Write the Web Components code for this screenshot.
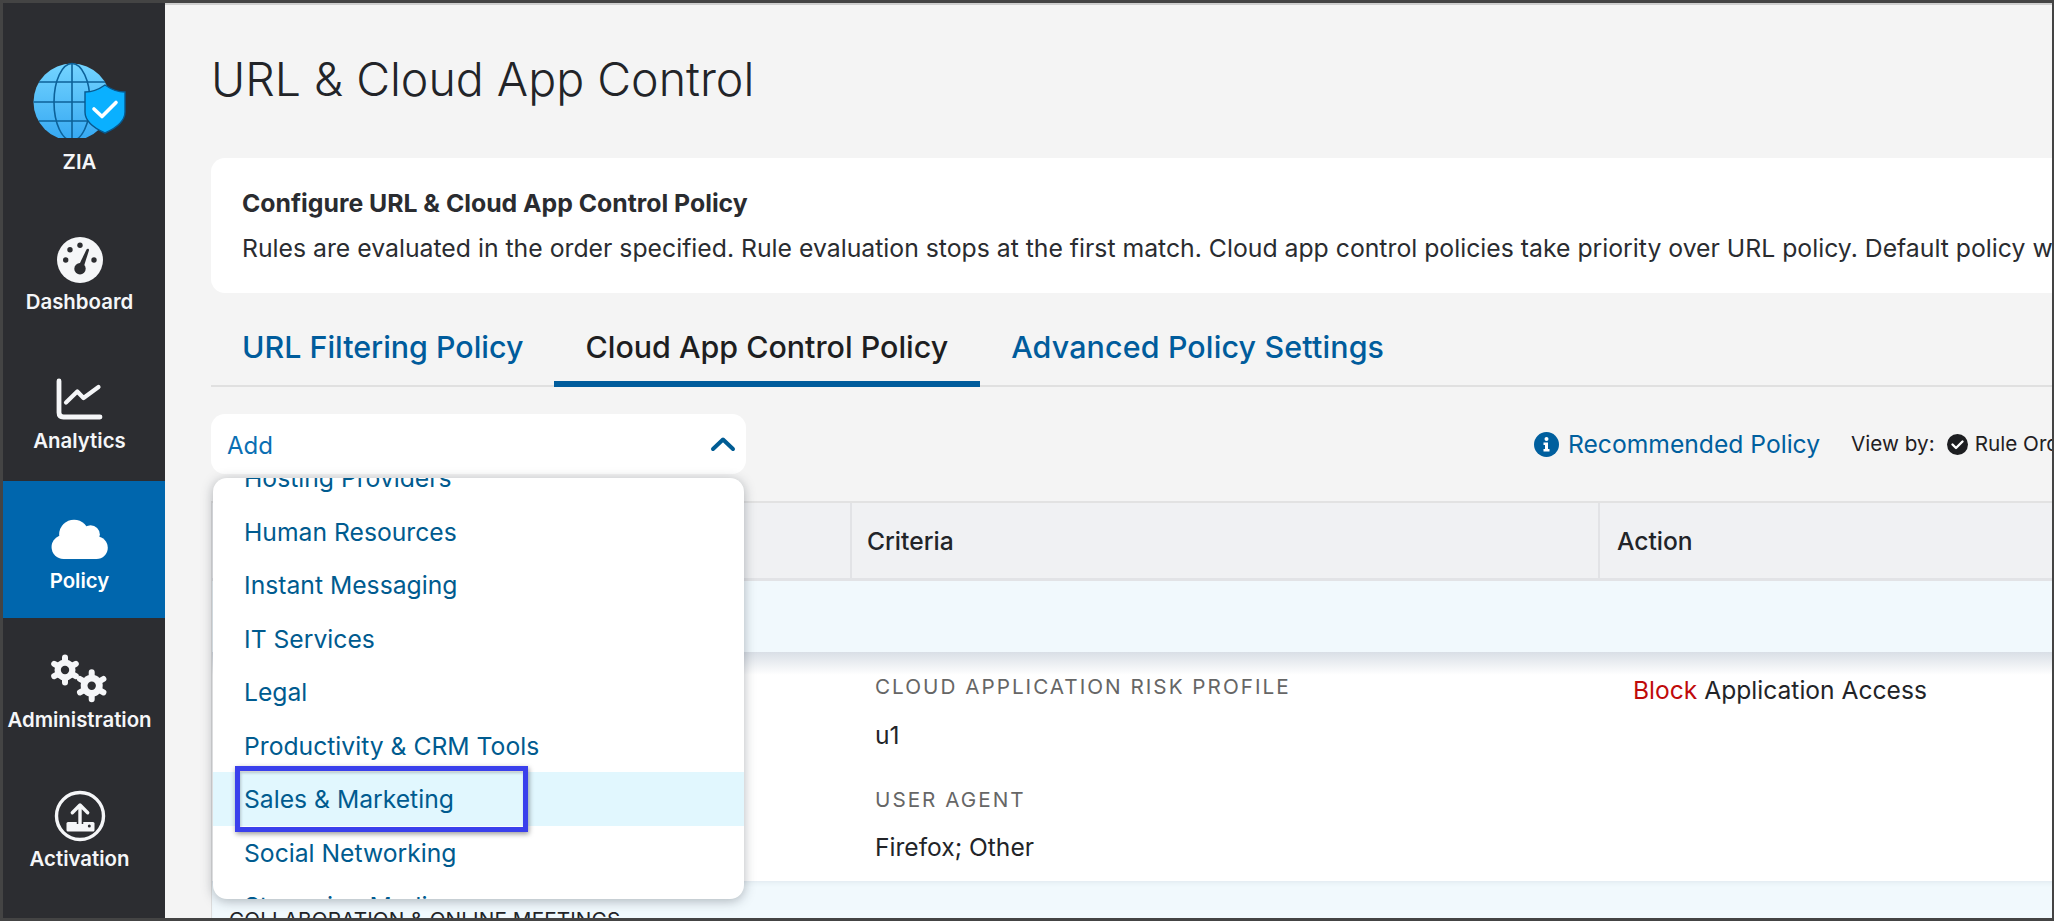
<!DOCTYPE html>
<html>
<head>
<meta charset="utf-8">
<title>URL &amp; Cloud App Control</title>
<style>
  html, body { margin: 0; background: #444; }
  body { font-family: Inter, "Noto Sans", sans-serif; }
</style>
</head>
<body>
<zs-app>
  <zs-sidebar slot="sidebar">
    <zs-nav-item label="ZIA" style="--height:199px;--top:41px;--icon-h:104px;">
      <svg width="100" height="80" viewBox="30 58 100 80">
        <defs><linearGradient id="g" x1="0" y1="0" x2="0" y2="1"><stop offset="0" stop-color="#74d4ff"/><stop offset="1" stop-color="#35a8f2"/></linearGradient></defs>
        <circle cx="72" cy="102" r="38.5" fill="url(#g)"/>
        <g fill="none" stroke="#0c6199" stroke-width="1.6">
          <ellipse cx="72" cy="102" rx="18" ry="38.5"/>
          <path d="M72 63.5V140.5M39 82H105M33.5 102H110M39 121H105"/>
        </g>
        <path d="M105 85C112 90 118 92 125 92L125 112C125 122 114 129 105 133C96 129 85 122 85 112L85 92C92 92 98 90 105 85Z" fill="#0ab0ff" stroke="#07598f" stroke-width="1.4"/>
        <path d="M94 109L102 116.500L116 102.500" fill="none" stroke="#fff" stroke-width="3.600" stroke-linecap="round" stroke-linejoin="round"/>
      </svg>
    </zs-nav-item>
    <zs-nav-item label="Dashboard">
      <svg width="48" height="48" viewBox="-24 -24 48 48">
        <circle r="23" fill="#f5f6f8"/>
        <g fill="#2c2d31"><circle cx="-14.300" r="2.700"/><circle cx="-10" cy="-10.300" r="2.700"/><circle cy="-14.700" r="2.700"/><circle cx="14" r="2.700"/><circle cy="8.700" r="5.700"/></g>
        <path d="M-2 7L6.500 -10.500C7.300 -12 9.300 -11.300 9 -9.700L3 9Z" fill="#2c2d31"/>
      </svg>
    </zs-nav-item>
    <zs-nav-item label="Analytics" style="--height:138px;">
      <svg width="50" height="44" viewBox="55 376 50 44">
        <path d="M59 380V411.500Q59 416 63.500 416H100" fill="none" stroke="#f5f6f8" stroke-width="4.800" stroke-linecap="round"/>
        <path d="M66 401.500L77.300 390.500L83.500 397L98.500 386" fill="none" stroke="#f5f6f8" stroke-width="4.200" stroke-linecap="round" stroke-linejoin="round"/>
      </svg>
    </zs-nav-item>
    <zs-nav-item label="Policy" active style="--height:137px;--top:28px;">
      <svg width="60" height="43" viewBox="150 140 180 130">
        <g fill="#fff"><circle cx="222" cy="190" r="45"/><circle cx="272" cy="190" r="28"/><circle cx="190" cy="228" r="36"/><circle cx="290" cy="230" r="34"/><rect x="190" y="195" width="100" height="69"/></g>
      </svg>
    </zs-nav-item>
    <zs-nav-item label="Administration" style="--height:140px;--top:30px;">
      <svg width="60" height="50" viewBox="50 653 60 50">
        <g transform="translate(65 670)">
          <circle r="10.500" fill="#f5f6f8"/>
          <path d="M0 -12.500V12.500M-10.800 -6.200L10.800 6.200M-10.800 6.200L10.800 -6.200" stroke="#f5f6f8" stroke-width="6" stroke-linecap="round"/>
          <circle r="4.200" fill="#2c2d31"/>
        </g>
        <g transform="translate(91.700 685.700)">
          <circle r="11" fill="#f5f6f8"/>
          <path d="M0 -13.500V13.500M-11.700 -6.700L11.700 6.700M-11.700 6.700L11.700 -6.700" stroke="#f5f6f8" stroke-width="6" stroke-linecap="round"/>
          <circle r="4.200" fill="#2c2d31"/>
        </g>
      </svg>
    </zs-nav-item>
    <zs-nav-item label="Activation" style="--height:140px;--top:29px;">
      <svg style="margin-top:-2px" width="52" height="52" viewBox="-26 -26 52 52">
        <circle r="23.500" fill="none" stroke="#f5f6f8" stroke-width="3.400"/>
        <rect x="-13.500" y="6" width="28" height="9.500" rx="1.500" fill="#f5f6f8"/>
        <path d="M0 8V-10" stroke="#2c2d31" stroke-width="6.500"/>
        <path d="M0 8V-10M-7.700 -3.300L0 -11L7.700 -3.300" fill="none" stroke="#f5f6f8" stroke-width="3.400" stroke-linecap="round" stroke-linejoin="round"/>
        <circle cx="9.300" cy="10" r="1.500" fill="#2c2d31"/>
      </svg>
    </zs-nav-item>
  </zs-sidebar>

  <zs-page-title>URL &amp; Cloud App Control</zs-page-title>
  <zs-info-card heading="Configure URL &amp; Cloud App Control Policy">Rules are evaluated in the order specified. Rule evaluation stops at the first match. Cloud app control policies take priority over URL policy. Default policy will apply if no rule matches.</zs-info-card>
  <zs-tabs>
    <zs-tab>URL Filtering Policy</zs-tab>
    <zs-tab active>Cloud App Control Policy</zs-tab>
    <zs-tab style="letter-spacing:.15px;">Advanced Policy Settings</zs-tab>
  </zs-tabs>
  <zs-toolbar>
    <zs-add-menu slot="add">
      <zs-menu-item>Hosting Providers</zs-menu-item>
      <zs-menu-item>Human Resources</zs-menu-item>
      <zs-menu-item>Instant Messaging</zs-menu-item>
      <zs-menu-item>IT Services</zs-menu-item>
      <zs-menu-item>Legal</zs-menu-item>
      <zs-menu-item>Productivity &amp; CRM Tools</zs-menu-item>
      <zs-menu-item selected>Sales &amp; Marketing</zs-menu-item>
      <zs-menu-item>Social Networking</zs-menu-item>
      <zs-menu-item>Streaming Media</zs-menu-item>
    </zs-add-menu>
  </zs-toolbar>
  <zs-rule-table>
    <zs-rule-row slot="rows"></zs-rule-row>
  </zs-rule-table>
</zs-app>

<script>
class ZsApp extends HTMLElement {
  constructor() {
    super();
    this.attachShadow({ mode: "open" }).innerHTML = `
    <style>
    :host {
      display: flex;
      box-sizing: border-box;
      width: 2054px;
      height: 921px;
      border: solid #444;
      border-width: 3px 2px 3px 3px;
      overflow: hidden;
      background: #f4f4f4;
    }
    main {
      flex: 1;
      min-width: 0;
      border-top: 2px solid #cfcfcf;
      padding-left: 46px;
      overflow: hidden;
    }
    .sb { flex: none; display: block; width: 162px; padding-top: 2px; background: #2c2d31; }
    </style>
    <div class="sb"><slot name="sidebar"></slot></div>
    <main><slot></slot></main>`;
  }
}

class ZsSidebar extends HTMLElement {
  constructor() {
    super();
    this.attachShadow({ mode: "open" }).innerHTML = `
    <style>
    :host { display: flex; flex-direction: column; }
    </style>
    <slot></slot>`;
  }
}

class ZsNavItem extends HTMLElement {
  constructor() {
    super();
    this.attachShadow({ mode: "open" }).innerHTML = `
    <style>
    :host {
      display: flex;
      flex-direction: column;
      align-items: center;
      box-sizing: border-box;
      height: var(--height, 139px);
      padding: var(--top, 26px) 9px 0 0;
      color: #f5f6f8;
      font: 600 20.4px/24px Inter, sans-serif;
    }
    :host([active]) { background: #0066ad; color: #fff; }
    .icon { height: var(--icon-h, 60px); display: flex; align-items: center; justify-content: center; }
    svg, ::slotted(svg) { display: block; }
    </style>
    <div class="icon"><slot></slot></div>
    <div class="label">${this.getAttribute("label")}</div>`;
  }
}

class ZsPageTitle extends HTMLElement {
  constructor() {
    super();
    this.attachShadow({ mode: "open" }).innerHTML = `
    <style>
    :host {
      display: block;
      padding: 45px 0 50px;
      color: #222428;
      font: 350 46.5px/58px Inter, sans-serif;
    }
    </style>
    <slot></slot>`;
  }
}

class ZsInfoCard extends HTMLElement {
  constructor() {
    super();
    this.attachShadow({ mode: "open" }).innerHTML = `
    <style>
    :host {
      display: block;
      box-sizing: border-box;
      height: 135px;
      margin-right: -24px;
      padding: 30px 31px;
      background: #fff;
      border-radius: 14px;
      white-space: nowrap;
      overflow: hidden;
      color: #2a2c30;
      font: 400 24.78px/30px Inter, sans-serif;
    }
    h2 { margin: 0 0 15px; font: 700 24.800px/30px Inter, sans-serif; }
    </style>
    <h2>${this.getAttribute("heading").replace("&", "&amp;")}</h2>
    <slot></slot>`;
  }
}

class ZsTabs extends HTMLElement {
  constructor() {
    super();
    this.attachShadow({ mode: "open" }).innerHTML = `
    <style>
    :host {
      display: flex;
      border-bottom: 2px solid #e0e0e0;
    }
    </style>
    <slot></slot>`;
  }
}

class ZsTab extends HTMLElement {
  constructor() {
    super();
    this.attachShadow({ mode: "open" }).innerHTML = `
    <style>
    :host {
      display: block;
      box-sizing: border-box;
      height: 94px;
      margin-bottom: -2px;
      padding: 38px 31px 0;
      color: #005c9c;
      font: 500 30.4px/32px Inter, sans-serif;
      white-space: nowrap;
    }
    :host([active]) { color: #1d1e21; border-bottom: 6px solid #005c9c; padding-right: 32px; }
    </style>
    <slot></slot>`;
  }
}

class ZsToolbar extends HTMLElement {
  constructor() {
    super();
    this.attachShadow({ mode: "open" }).innerHTML = `
    <style>
    :host {
      display: flex;
      align-items: center;
      height: 60px;
      margin-top: 27px;
      white-space: nowrap;
      font: 400 24.65px/30px Inter, sans-serif;
    }
    .actions { display: flex; align-items: center; margin-left: 788px; color: #005f9e; }
    .actions svg { display: block; flex: none; }
    .rec { margin: 0 31px 0 9px; }
    .view { color: #1f2023; font-size: 20.700px; display: flex; align-items: center; }
    .view svg { margin: 0 7px 0 12px; }
    </style>
    <slot name="add"></slot>
    <div class="actions">
      <svg width="25" height="25" viewBox="-12.500 -12.500 25 25">
        <circle r="12.500" fill="#005f9e"/>
        <circle cy="-5.500" r="2" fill="#fff"/>
        <path d="M-3 -2H1.500V4.500H3V7H-3V4.500H-1.500V.5H-3Z" fill="#fff"/>
      </svg>
      <span class="rec">Recommended Policy</span>
      <div class="view">
        <span>View by:</span>
        <svg width="21" height="21" viewBox="-10.500 -10.500 21 21">
          <circle r="10.500" fill="#1d1e21"/>
          <path d="M-5 0L-1.500 3.500L5 -3" fill="none" stroke="#fff" stroke-width="2.400" stroke-linecap="round" stroke-linejoin="round"/>
        </svg>
        <span>Rule Order</span>
      </div>
    </div>`;
  }
}

class ZsAddMenu extends HTMLElement {
  constructor() {
    super();
    this.attachShadow({ mode: "open" }).innerHTML = `
    <style>
    :host {
      display: block;
      flex: none;
      position: relative;
      z-index: 5;
      width: 535px;
      height: 60px;
    }
    .button {
      display: flex;
      align-items: center;
      justify-content: space-between;
      box-sizing: border-box;
      height: 60px;
      padding: 3px 10px 0 16px;
      background: #fff;
      border-radius: 14px;
      color: #0b6fb3;
      font: 400 24px/30px Inter, sans-serif;
    }
    svg { display: block; margin-top: -3px; }
    .menu {
      position: absolute;
      top: 64px;
      left: 2px;
      width: 531px;
      height: 421px;
      background: #fff;
      border-radius: 14px;
      box-shadow: 0 2px 12px rgba(40, 50, 60, .35);
      overflow: hidden;
    }
    .list { margin-top: -27px; }
    </style>
    <div class="button">
      <span>Add</span>
      <svg width="26" height="16" viewBox="0 0 26 16"><path d="M3 13L13 3.500L23 13" fill="none" stroke="#005c94" stroke-width="4" stroke-linecap="round" stroke-linejoin="round"/></svg>
    </div>
    <div class="menu"><div class="list"><slot></slot></div></div>`;
  }
}

class ZsMenuItem extends HTMLElement {
  constructor() {
    super();
    this.attachShadow({ mode: "open" }).innerHTML = `
    <style>
    :host {
      display: block;
      position: relative;
      box-sizing: border-box;
      height: 53.500px;
      padding: 1px 0 0 31px;
      color: #005b8f;
      font: 400 24.700px/53.500px Inter, sans-serif;
      white-space: nowrap;
    }
    :host([selected]) { background: #e1f7fe; }
    .mark { display: none; }
    :host([selected]) .mark {
      display: block;
      position: absolute;
      left: 22px;
      top: -6px;
      box-sizing: border-box;
      width: 293px;
      height: 66px;
      border: 5px solid #3a40ec;
      box-shadow: 1px 2px 5px rgba(0, 0, 0, .4), inset 1px 2px 3px rgba(0, 0, 0, .2);
    }
    </style>
    <slot></slot>
    <div class="mark"></div>`;
  }
}

class ZsRuleTable extends HTMLElement {
  constructor() {
    super();
    this.attachShadow({ mode: "open" }).innerHTML = `
    <style>
    :host {
      display: block;
      margin-top: 27px;
      margin-right: -24px;
      border-left: 1px solid #ddd;
      white-space: nowrap;
      font: 400 24.600px/24px Inter, sans-serif;
      color: #222428;
    }
    .head {
      display: grid;
      grid-template-columns: 640px 748px 1fr;
      height: 80px;
      box-sizing: border-box;
      border-top: 2px solid #e2e2e2;
      border-bottom: 3px solid #e2e3e6;
      background: #f0f1f3;
      font-weight: 500;
    }
    .head div { padding: 26px 0 0 15px; border-right: 2px solid #e2e3e6; }
    .head div:last-child { border-right: 0; padding-left: 17px; }
    .band { height: 71px; background: #f1f9fd; }
    .tail {
      height: 42px;
      box-sizing: border-box;
      padding: 27px 0 0 17px;
      background: #f1f9fd;
      box-shadow: inset 0 4px 6px -4px rgba(120, 135, 150, .2);
      font-size: 20.700px;
      letter-spacing: .1px;
    }
    </style>
    <div class="head"><div></div><div>Criteria</div><div>Action</div></div>
    <div class="band"></div>
    <slot name="rows"></slot>
    <div class="tail">COLLABORATION &amp; ONLINE MEETINGS</div>`;
  }
}

class ZsRuleRow extends HTMLElement {
  constructor() {
    super();
    this.attachShadow({ mode: "open" }).innerHTML = `
    <style>
    :host {
      display: grid;
      grid-template-columns: 640px 748px 1fr;
      height: 229px;
      background: linear-gradient(#d9dfe6, #fff 23px);
    }
    .crit { padding: 23px 0 0 23px; }
    .lbl { color: #666; font-size: 20.700px; letter-spacing: 2px; margin-bottom: 24px; }
    .val { margin-bottom: 41px; }
    .lbl.second { margin-bottom: 23px; }
    .act { padding: 26px 0 0 33px; }
    .act b { font-weight: 400; color: #bf0a0a; }
    </style>
    <div></div>
    <div class="crit">
      <div class="lbl">CLOUD APPLICATION RISK PROFILE</div>
      <div class="val">u1</div>
      <div class="lbl second">USER AGENT</div>
      <div class="val">Firefox; Other</div>
    </div>
    <div class="act"><b>Block</b> Application Access</div>`;
  }
}

customElements.define("zs-app", ZsApp);
customElements.define("zs-sidebar", ZsSidebar);
customElements.define("zs-nav-item", ZsNavItem);
customElements.define("zs-page-title", ZsPageTitle);
customElements.define("zs-info-card", ZsInfoCard);
customElements.define("zs-tabs", ZsTabs);
customElements.define("zs-tab", ZsTab);
customElements.define("zs-toolbar", ZsToolbar);
customElements.define("zs-add-menu", ZsAddMenu);
customElements.define("zs-menu-item", ZsMenuItem);
customElements.define("zs-rule-table", ZsRuleTable);
customElements.define("zs-rule-row", ZsRuleRow);
</script>
</body>
</html>
